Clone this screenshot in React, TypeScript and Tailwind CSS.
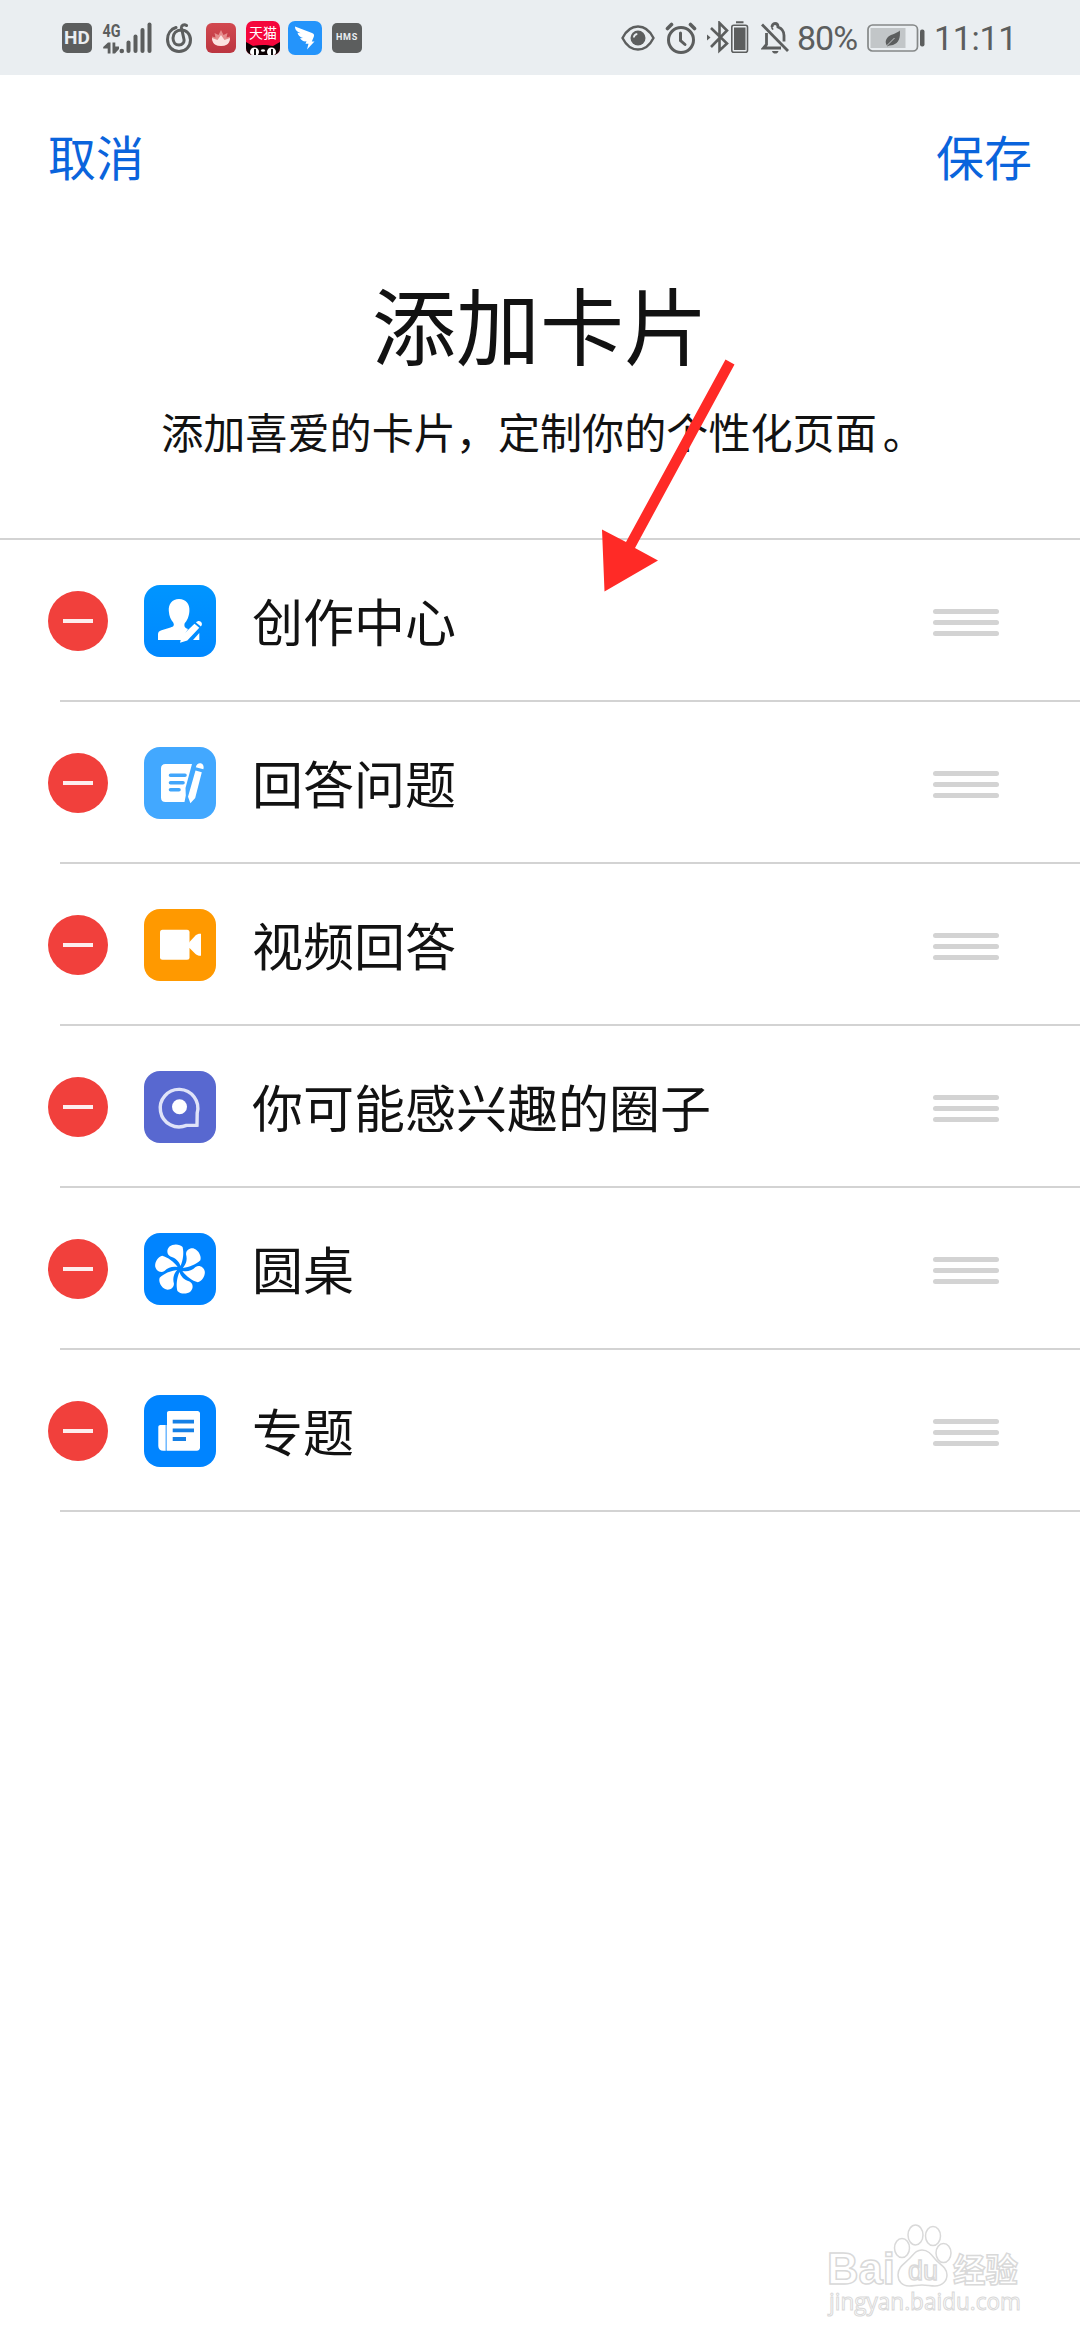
import React from "react";

const CreatorIcon = () => (
  <svg viewBox="0 0 72 72" className="w-[72px] h-[72px]" fill="#fff">
    <path d="M35 14c7 0 11 5 10.400 12-.4 6-2.400 9.500-4.800 12.500-.6 3 .2 4.500 3.400 5.500L37 55H14v-5.500c0-2.500 1-3.500 3.500-4.300l9-2.700c3.500-1 4-2.500 2.700-5-2.400-3-4-6-4.400-11.500C24.300 19 28 14 35 14z" />
    <path d="M50.500 38.800l4.800 4-12 12.700-7.300 2.300 1.700-6.800z" />
    <path d="M52 37.500c1.300-1.700 3.300-2 4.800-.8s1.500 3.200.1 4.800z" />
    <path d="M55.300 48v7h-6.300z" />
  </svg>
);

const AnswerIcon = () => (
  <svg viewBox="0 0 72 72" className="w-[72px] h-[72px]">
    <path
      d="M21.500 17H48l-6.500 24 .3 7.500-1.300 6.500h-19c-3 0-4.500-1.500-4.500-4.500v-29c0-3 1.500-4.500 4.500-4.500z"
      fill="#fff"
    />
    <path
      d="M26.500 28.200H41M26.500 35.700H39M26.500 42.800H35"
      stroke="#42a6fb"
      strokeWidth="3.600"
      strokeLinecap="round"
    />
    <path
      d="M51.500 23.500l6.300 1.700-6.600 25.800-4.800 5.200-2.400-6.500zM51.800 20.300c.7-3 2.700-4.500 5-4 2.500.7 3.400 3 2.600 6z"
      fill="#fff"
    />
  </svg>
);

const VideoIcon = () => (
  <svg viewBox="0 0 72 72" className="w-[72px] h-[72px]" fill="#fff">
    <rect x="16" y="20.700" width="29.500" height="30" rx="2.500" />
    <path d="M45 33.500l6.500-7c1.500-1.500 3.500-2 5.500-1.800v22c-2 .2-4-.3-5.500-1.700L45 38.500z" />
  </svg>
);

const CircleIcon = () => (
  <svg viewBox="0 0 72 72" className="w-[72px] h-[72px]">
    <path
      d="M53 54.200l-10.500.2A18.800 18.800 0 1 1 53.200 42z"
      fill="none"
      stroke="#dfe3f8"
      strokeWidth="3.400"
    />
    <circle cx="35.500" cy="35.700" r="7.500" fill="#fff" />
  </svg>
);

const angles = [0, 60, 120, 180, 240, 300];

const TableIcon = () => (
  <svg viewBox="0 0 72 72" className="w-[72px] h-[72px]" fill="#fff">
    {angles.map((a) => (
      <path
        key={a}
        transform={`rotate(${a} 36 36)`}
        d="M36.500 33C35 28.500 32 25 26.500 23.500C22.500 21.500 22.500 16.300 25.500 13.500C29 10.500 36 10.800 38.600 14C40 19.500 39.300 27 36.500 33z"
      />
    ))}
  </svg>
);

const TopicIcon = () => (
  <svg viewBox="0 0 72 72" className="w-[72px] h-[72px]">
    <path
      d="M25 16h28.500c1.500 0 2.500 1 2.500 2.500v34c0 2-1.200 3.200-3.200 3.200H23V18c0-1.200.8-2 2-2zM21.700 30v25.700h-2.500c-3 0-4.900-1.700-4.900-4.700V32c0-1.300.9-2 2.200-2z"
      fill="#fff"
    />
    <path d="M22.200 30v25.700" stroke="#a9d4ff" strokeWidth="1" />
    <path
      d="M28.700 26.700H50M28.700 35.400H50M28.700 44H42"
      stroke="#1580e6"
      strokeWidth="3.800"
    />
  </svg>
);

const cards = [
  { name: "创作中心", bg: "bg-linear-to-b from-[#0095ff] to-[#0088ff]", icon: <CreatorIcon /> },
  { name: "回答问题", bg: "bg-[#42a8ff]", icon: <AnswerIcon /> },
  { name: "视频回答", bg: "bg-[#ff9900]", icon: <VideoIcon /> },
  { name: "你可能感兴趣的圈子", bg: "bg-[#5868d0]", icon: <CircleIcon /> },
  { name: "圆桌", bg: "bg-[#0084ff]", icon: <TableIcon /> },
  { name: "专题", bg: "bg-[#0084ff]", icon: <TopicIcon /> },
];

const StatusBar = () => (
  <div className="h-[75px] w-full bg-[#eaeef1] flex items-center justify-between pl-[62px] pr-[66px] text-[#5c5e5e]">
    <div className="flex items-center">
      <div className="w-[30px] h-[30px] rounded-[5px] bg-[#5c5e5e] text-[#eaeef1] text-[19px] leading-none font-bold flex items-center justify-center">
        HD
      </div>
      <svg viewBox="0 0 50 32" className="w-[50px] h-8 ml-2.5 overflow-visible" fill="#5c5e5e">
        <text x="0.500" y="14.500" fontSize="18" fontWeight="700" textLength="18" lengthAdjust="spacingAndGlyphs">
          4G
        </text>
        <path d="M8.500 20.500v11H5.700V26.500H1.200V25L6 20.500zM10.500 20.500h2.800v4H17V27l-4 4.500h-2.500z" />
        <circle cx="19.800" cy="29" r="2.300" />
        <rect x="24.500" y="18.500" width="4" height="12.500" rx="2" />
        <rect x="31.500" y="12.500" width="4" height="18.500" rx="2" />
        <rect x="38.500" y="6" width="4" height="25" rx="2" />
        <rect x="45.500" y="0.500" width="4" height="30.500" rx="2" />
      </svg>
      <svg
        viewBox="0 0 26 30"
        className="w-[26px] h-[30px] ml-3.5"
        fill="none"
        stroke="#5c5e5e"
        strokeWidth="3"
        strokeLinecap="round"
      >
        <path d="M10 4.500C5 6 1.500 10.500 1.500 16.500c0 7 5 12 11.500 12s11.500-5 11.500-11.500c0-6-4-10-9.500-10-4.500 0-8 3.500-8 8s2.500 7 6 7 5.500-2.800 5-5.500L15.500 5c-.3-2.500 2.500-4.300 5-2.500" />
      </svg>
      <div className="w-[30px] h-[30px] ml-3.5 rounded-md bg-linear-to-b from-[#d2484f] to-[#bb3540]">
        <svg viewBox="0 0 30 30" className="w-[30px] h-[30px]">
          <path
            d="M6 13.500l3.500 1L8.500 10l4 2L15 7l2.500 5 4-2-1 4.500 3.500-1c0 5.500-3 9.500-9 9.500s-9-4-9-9.500z"
            fill="#e58d8d"
          />
          <path d="M6 15l5.500 2 3.500-5 3.500 5 5.500-2c0 5-3 8-9 8s-9-3-9-8z" fill="#fbe3e0" />
        </svg>
      </div>
      <div className="w-[34px] h-[34px] ml-2.5 rounded-[7px] bg-[#f5073c] overflow-hidden relative flex justify-center">
        <span className="text-white text-[14px] leading-[24px] whitespace-nowrap">天猫</span>
        <svg viewBox="0 0 34 14" className="absolute left-0 bottom-0 w-[34px] h-3.5">
          <path d="M0 1l7 4c6-1.500 14-1.500 20 0l7-4v13H0z" fill="#0b0203" />
          <circle cx="8.500" cy="11" r="4.500" fill="#fff" />
          <circle cx="25.500" cy="11" r="4.500" fill="#fff" />
          <path d="M8 8h2v6H8zM25 8h2v6h-2z" fill="#111" />
          <ellipse cx="17" cy="9.500" rx="2" ry="1.200" fill="#fff" />
        </svg>
      </div>
      <div className="w-[34px] h-[34px] ml-2 rounded-[7px] bg-[#2494fb]">
        <svg viewBox="0 0 34 34" className="w-[34px] h-[34px]" fill="#fff">
          <path d="M7 5.500l17 6.500c2.300 1 2.500 2.200 1.500 4.500l-1.700 4h2.700l-7.500 8 1.500-5.700h-3l1-2.500c-2.500.5-5-.5-6.500-3l3-.2c-3-1-5-2.600-5.500-5.300l3 .4C9 10.500 7 9 7 5.500z" />
        </svg>
      </div>
      <div className="w-[30px] h-[30px] ml-2.5 rounded-[5px] bg-[#5c5e5e] text-[#eaeef1] text-[9px] leading-none font-bold tracking-[0.7px] flex items-center justify-center">
        HMS
      </div>
    </div>
    <div className="flex items-center">
      <svg viewBox="0 0 34 26" className="w-[34px] h-[26px]" fill="none" stroke="#5c5e5e">
        <path d="M1.500 13C5 6 10.500 1.500 17 1.500S29 6 32.500 13C29 20 23.500 24.500 17 24.500S5 20 1.500 13z" strokeWidth="2.400" />
        <circle cx="17" cy="13" r="7.500" fill="#5c5e5e" stroke="none" />
        <path d="M12.800 12.500c.2-2 1.300-3.300 3.500-3.700" stroke="#eaeef1" strokeWidth="1.800" />
      </svg>
      <svg viewBox="0 0 32 32" className="w-8 h-8 ml-2.5" fill="none" stroke="#5c5e5e" strokeLinecap="round">
        <circle cx="16" cy="18" r="12.500" strokeWidth="3" />
        <path d="M15.500 11v7.500l4.500 4" strokeWidth="3" />
        <path d="M2.500 6.500l4-4M29.500 6.500l-4-4" strokeWidth="3.600" />
      </svg>
      <svg viewBox="0 0 42 33" className="w-[42px] h-[33px] ml-2.5" fill="none" stroke="#5c5e5e">
        <path d="M4 7l16 15.500-7.500 7V2L20 9.500 4 26" strokeWidth="2.600" />
        <path d="M0 13.500L3.500 16.500 0 19.500z" fill="#5c5e5e" stroke="none" />
        <rect x="24.800" y="4.300" width="15.700" height="27" rx="2" strokeWidth="1.600" />
        <path d="M27 6.500h11.500v22.500H27zM29 .3h7.500v1.900H29z" fill="#5c5e5e" stroke="none" />
      </svg>
      <svg viewBox="0 0 28 32" className="w-7 h-8 ml-3" fill="none" stroke="#5c5e5e" strokeWidth="2.800">
        <path d="M1 2.500l26 26.500" />
        <path d="M5.500 11v11.500L2.500 26H20M11 5c0-2 1-3.500 3-3.500s3 1.500 3 3.500c4 1.500 6 4.500 6 8.500v6M10.500 6.800l1.500-.8" />
        <path d="M11 29h6.500c-.5 1.800-1.600 2.600-3.200 2.600S11.500 30.800 11 29z" fill="#5c5e5e" stroke="none" />
      </svg>
      <span className="ml-2 w-[62px] text-[34px] leading-none tracking-[-1px]">80%</span>
      <svg viewBox="0 0 58 28" className="w-[58px] h-7 ml-2" fill="none">
        <rect x="1" y="1" width="49.500" height="26" rx="4.500" stroke="#858888" strokeWidth="1.700" />
        <rect x="3.500" y="4" width="35" height="20" fill="#c2c6c8" />
        <path d="M32.800 6.500c.8 7-1 12.500-6.800 14.500-2 .7-4.500.3-5.500 1.500-2.500-3-2.500-7 1-10 3-2.500 7.500-2.500 11.300-6z" fill="#5c5e5e" />
        <path d="M19.500 22l8-8" stroke="#c2c6c8" />
        <rect x="53" y="5.500" width="4.500" height="17" rx="2" fill="#5c5e5e" />
      </svg>
      <span className="ml-[9px] w-[80px] text-[34px] leading-none tracking-[-0.3px] whitespace-nowrap">11:11</span>
    </div>
  </div>
);

const CardRow = (props: any) => {
  const { name, bg, icon } = props;

  return (
    <div>
      <div className="h-[160px] flex items-center pl-12 pr-[81px] pt-0.5">
        <button className="w-[60px] h-[60px] rounded-full bg-[#f1403c] flex items-center justify-center">
          <span className="w-[30px] h-1 bg-[#fdeeee]"></span>
        </button>
        <div className={`w-[72px] h-[72px] ml-9 rounded-2xl ${bg}`}>{icon}</div>
        <p className="ml-9 mt-2 flex-1 text-[51px] leading-[72px]">{name}</p>
        <div className="flex flex-col gap-1.5 mt-0.5">
          <span className="w-[66px] h-[5px] rounded-full bg-[#d3d3d3]"></span>
          <span className="w-[66px] h-[5px] rounded-full bg-[#d3d3d3]"></span>
          <span className="w-[66px] h-[5px] rounded-full bg-[#d3d3d3]"></span>
        </div>
      </div>
      <div className="ml-[60px] h-0.5 bg-[#d3d3d3]"></div>
    </div>
  );
};

const Watermark = () => (
  <svg
    viewBox="0 0 200 100"
    className="absolute left-[826px] top-[2220px] w-[200px] h-[100px] font-['Liberation_Sans','Noto_Sans_CJK_SC',sans-serif]"
    fill="#fff"
    stroke="#d9d9d9"
    strokeWidth="1.500"
  >
    <text x="1" y="64" fontSize="44" fontWeight="700" textLength="68" lengthAdjust="spacingAndGlyphs">
      Bai
    </text>
    <ellipse cx="76" cy="28" rx="7.500" ry="9.500" />
    <ellipse cx="89.500" cy="15" rx="7.500" ry="10" />
    <ellipse cx="107" cy="16" rx="7.500" ry="9.500" />
    <ellipse cx="117.500" cy="33" rx="7.500" ry="9.500" />
    <path d="M96 30c6 0 9 4 13 9s12 8 12 16c0 6-5 11-12 11-5 0-8-1-13-1s-8 1-13 1c-7 0-11-5-11-11 0-8 6-11 11-16s7-9 13-9z" />
    <text x="82" y="60" fontSize="27" textLength="30" lengthAdjust="spacingAndGlyphs">
      du
    </text>
    <text x="127" y="62" fontSize="33" fontWeight="700" textLength="65" lengthAdjust="spacingAndGlyphs">
      经验
    </text>
    <text
      x="3"
      y="90"
      fontSize="23"
      strokeWidth="1"
      textLength="192"
      lengthAdjust="spacingAndGlyphs"
      className="font-['Open_Sans',sans-serif]"
    >
      jingyan.baidu.com
    </text>
  </svg>
);

const App = () => {
  return (
    <div className="relative w-[1080px] h-[2340px] bg-white overflow-hidden text-[#121212] font-[Roboto,'Noto_Sans_CJK_SC',sans-serif]">
      <StatusBar />
      <div className="flex items-center justify-between px-12 pt-[49px] text-[48px] leading-[72px] text-[#0a64dc]">
        <button>取消</button>
        <button>保存</button>
      </div>
      <div className="h-[342px] flex flex-col items-center">
        <h1 className="mt-[75px] text-[84px] leading-[120px]">添加卡片</h1>
        <p className="mt-3.5 text-[42.100px] leading-[60px] whitespace-nowrap">
          添加喜爱的卡片，定制你的个性化页面<span className="inline-block translate-x-1.5">。</span>
        </p>
      </div>
      <div className="h-0.5 bg-[#d3d3d3]"></div>
      {cards.map((card) => (
        <CardRow key={card.name} {...card} />
      ))}
      <svg viewBox="0 0 140 240" className="absolute left-[600px] top-[355px] w-[140px] h-[240px]" fill="#ff2a26">
        <path d="M125.500 4.500l9 5L35 193l23 12.500L4.500 236.500 2 174.500 26 187z" />
      </svg>
      <Watermark />
    </div>
  );
};

export default App;
